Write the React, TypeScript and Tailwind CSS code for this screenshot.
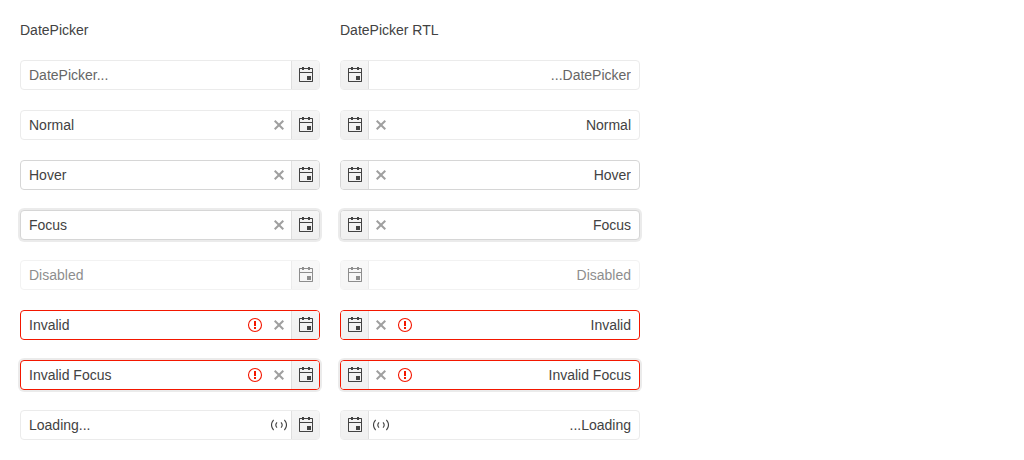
import { useState } from "react";
import clsx from "clsx";

type Field = {
  value?: string;
  placeholder?: string;
  label: string;
  look?: "hover" | "focus" | "invalid" | "invalid-focus";
  disabled?: boolean;
  loading?: boolean;
  clearable?: boolean;
};

const fields: Field[] = [
  { label: "Empty", placeholder: "DatePicker..." },
  { label: "Normal", value: "Normal", clearable: true },
  { label: "Hover", value: "Hover", look: "hover", clearable: true },
  { label: "Focus", value: "Focus", look: "focus", clearable: true },
  { label: "Disabled", value: "Disabled", disabled: true },
  { label: "Invalid", value: "Invalid", look: "invalid", clearable: true },
  { label: "Invalid focus", value: "Invalid Focus", look: "invalid-focus", clearable: true },
  { label: "Loading", value: "Loading...", loading: true },
];

function CalendarIcon() {
  return (
    <svg viewBox="0 0 16 16" className="size-4 shrink-0" fill="currentColor" aria-hidden="true">
      <path
        fillRule="evenodd"
        d="M1.5 1H4V0h2v1h4V0h2v1h2.5l.5.5v13l-.5.5h-13l-.5-.5v-13zM2 6v8h12V6zM2 2v3h12V2h-2v1h-2V2H6v1H4V2z"
      />
      <path d="M9 9h4v4H9z" />
    </svg>
  );
}

function ClearIcon() {
  return (
    <svg viewBox="0 0 512 512" className="size-4 shrink-0" fill="currentColor" aria-hidden="true">
      <path d="M416 141.3 370.7 96 256 210.7 141.3 96 96 141.3 210.7 256 96 370.7 141.3 416 256 301.3 370.7 416 416 370.7 301.3 256z" />
    </svg>
  );
}

function WarningIcon() {
  return (
    <svg viewBox="0 0 16 16" className="size-4 shrink-0" fill="currentColor" aria-hidden="true">
      <circle cx="8" cy="8" r="6.5" fill="none" stroke="currentColor" strokeWidth="1.1" />
      <path d="M7 4h2v5H7zM7 10h2v2H7z" />
    </svg>
  );
}

function LoadingIcon() {
  return (
    <svg
      viewBox="0 0 16 16"
      className="size-4 shrink-0"
      fill="none"
      stroke="currentColor"
      strokeWidth="1.1"
      aria-hidden="true"
    >
      <path d="M2.6 2.8Q-1.6 8 2.6 13.2M13.4 2.8Q17.6 8 13.4 13.2" />
      <path d="M6 5.3Q3.6 8 6 10.7M10 5.3Q12.4 8 10 10.7" />
    </svg>
  );
}

function DatePicker({ field, rtl }: { field: Field; rtl?: boolean }) {
  const [value, setValue] = useState(field.value ?? "");
  const { look } = field;
  const invalid = look === "invalid" || look === "invalid-focus";
  const focused = look === "focus" || look === "invalid-focus";

  return (
    <div
      dir={rtl ? "rtl" : "ltr"}
      className={clsx(
        "flex rounded border bg-white",
        !look && "border-[#ebebeb]",
        (look === "hover" || look === "focus") && "border-[#d6d6d6]",
        invalid && "border-[#f31700]",
        focused && "shadow-[0_0_0_2px_rgba(0,0,0,0.08)]",
        field.disabled && "opacity-60",
      )}
    >
      <input
        type="text"
        aria-label={field.label}
        aria-invalid={invalid}
        disabled={field.disabled}
        placeholder={field.placeholder}
        value={value}
        onChange={(event) => setValue(event.target.value)}
        className="min-w-0 flex-1 bg-transparent px-2 py-1 text-sm leading-5 text-[#424242] outline-none placeholder:text-[#666666]"
      />
      {invalid && (
        <span className="flex items-center px-1 text-[#f31700]">
          <WarningIcon />
        </span>
      )}
      {field.loading && (
        <span className="flex items-center px-1 text-[#424242]">
          <LoadingIcon />
        </span>
      )}
      {field.clearable && (
        <button
          type="button"
          aria-label="Clear"
          onClick={() => setValue("")}
          className="flex items-center px-1 text-[#424242] opacity-50"
        >
          <ClearIcon />
        </button>
      )}
      <button
        type="button"
        aria-label="Open calendar"
        disabled={field.disabled}
        className="flex items-center rounded-e-[3px] border-s border-black/8 bg-[#f5f5f5] bg-linear-to-b from-transparent to-black/2 pr-[5px] pl-1.5 text-[#424242]"
      >
        <CalendarIcon />
      </button>
    </div>
  );
}

function Column({ title, rtl }: { title: string; rtl?: boolean }) {
  return (
    <section className="flex min-w-0 flex-col gap-5">
      <h2 className="text-sm leading-5">{title}</h2>
      {fields.map((field) => (
        <DatePicker key={field.label} field={field} rtl={rtl} />
      ))}
    </section>
  );
}

export default function App() {
  return (
    <main className="bg-white p-5 font-['Liberation_Sans',Arial,sans-serif] text-sm text-[#424242]">
      <div className="grid max-w-[620px] grid-cols-2 gap-5">
        <Column title="DatePicker" />
        <Column title="DatePicker RTL" rtl />
      </div>
    </main>
  );
}
